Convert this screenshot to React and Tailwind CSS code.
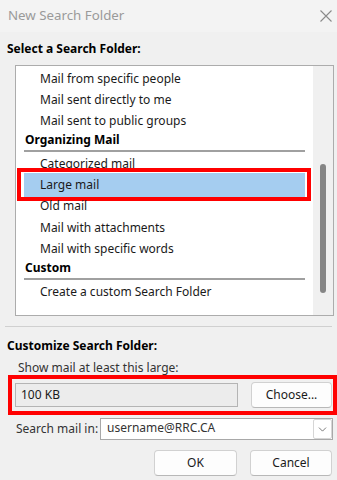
import { ChevronDown } from 'lucide-react'

const sections = [
  { items: ['Mail from specific people', 'Mail sent directly to me', 'Mail sent to public groups'] },
  { title: 'Organizing Mail', items: ['Categorized mail', 'Large mail', 'Old mail', 'Mail with attachments', 'Mail with specific words'] },
  { title: 'Custom', items: ['Create a custom Search Folder'] },
]

const font = { fontFamily: '"Noto Sans", "Open Sans", sans-serif' }

function Row({ label, selected }) {
  return (
    <div className="relative h-[21.3px] flex items-center">
      {selected && <div className="absolute inset-x-0 top-[-1px] bottom-[-1px] bg-[#a5cdf0]" />}
      {selected && <div className="absolute top-[-6px] bottom-[-5px] left-[-7px] right-[-6px] border-4 border-[#ff0000]" />}
      <span className="relative pl-4 text-[12px] text-[#1a1a1a] whitespace-nowrap">{label}</span>
    </div>
  )
}

function Header({ title }) {
  return (
    <div className="h-[21.3px] flex flex-col justify-end">
      <span className="pl-px text-[12px] font-bold text-black leading-[14px] mb-[3px]">{title}</span>
      <div className="h-[2px] bg-[#a0a0a0] mb-[1px]" />
    </div>
  )
}

function Button({ children, className }) {
  return (
    <button className={`h-[26px] rounded-[4px] border border-[#d1d1d1] border-b-[#b8b8b8] bg-[#fdfdfd] text-[12px] text-[#1a1a1a] ${className}`}>
      {children}
    </button>
  )
}

export default function App() {
  return (
    <div className="w-[337px] h-[480px] bg-[#f0f0f0] overflow-hidden" style={font}>
      {/* Title bar */}
      <div className="h-[32px] bg-[#f3f3f3] flex items-center justify-between pl-2 pr-[5px]">
        <span className="text-[13.3px] text-[#9a9a9a] leading-none">New Search Folder</span>
        <svg width="14" height="14" viewBox="0 0 14 14" className="mr-[-1px]">
          <path d="M1.5 1.5 L12.5 12.5 M12.5 1.5 L1.5 12.5" stroke="#8a8a8a" strokeWidth="1.1" fill="none" />
        </svg>
      </div>

      <div className="pl-[7px] pt-[9px] text-[12px] font-bold text-black leading-[16px]">Select a Search Folder:</div>

      {/* List box */}
      <div className="ml-[15px] mt-[8px] w-[319px] h-[251px] border border-[#acacac] bg-white flex">
        <div className="flex-1 px-[8px] pt-[2px] overflow-hidden">
          {sections.map((s, i) => (
            <div key={i}>
              {s.title && <Header title={s.title} />}
              {s.items.map(item => (
                <Row key={item} label={item} selected={item === 'Large mail'} />
              ))}
            </div>
          ))}
        </div>
        <div className="w-[20px] bg-[#f0f0f0] flex justify-center pt-[98px]">
          <div className="w-[6px] h-[129px] rounded-full bg-[#858585]" />
        </div>
      </div>

      <div className="mx-[5px] mt-[10px] h-px bg-[#d0d0d0]" />

      <div className="pl-[7px] mt-[11px] text-[12px] font-bold text-black leading-[16px]">Customize Search Folder:</div>
      <div className="pl-[18px] mt-[6px] text-[12px] text-[#333] leading-[16px]">Show mail at least this large:</div>

      {/* Size row */}
      <div className="ml-[8px] mt-[-1px] w-[329px] h-[40px] border-4 border-[#ff0000] flex items-center pl-[3px]">
        <div className="w-[223px] h-[24px] border border-[#b4b4b4] bg-[#ececec] flex items-center pl-[5px] text-[12px] text-[#1a1a1a]">
          100 KB
        </div>
        <Button className="ml-[13px] w-[81px]">Choose...</Button>
      </div>

      {/* Search mail in */}
      <div className="flex items-center mt-[3px] h-[22px]">
        <span className="pl-[16px] w-[100px] text-[12px] text-[#333] whitespace-nowrap">Search mail in:</span>
        <div className="w-[233px] h-[22px] border border-[#a8a8a8] bg-white flex items-center">
          <span className="flex-1 pl-[6px] text-[12px] text-[#333] pb-[3px]">username@RRC.CA</span>
          <div className="w-[19px] h-[20px] mr-[0px] border border-[#d6d6d6] rounded-[2px] flex items-center justify-center">
            <ChevronDown size={13} strokeWidth={1.3} color="#444" />
          </div>
        </div>
      </div>

      {/* Footer buttons */}
      <div className="flex mt-[10px] pl-[154px] gap-[13px]">
        <Button className="w-[83px]">OK</Button>
        <Button className="w-[82px]">Cancel</Button>
      </div>
    </div>
  )
}
